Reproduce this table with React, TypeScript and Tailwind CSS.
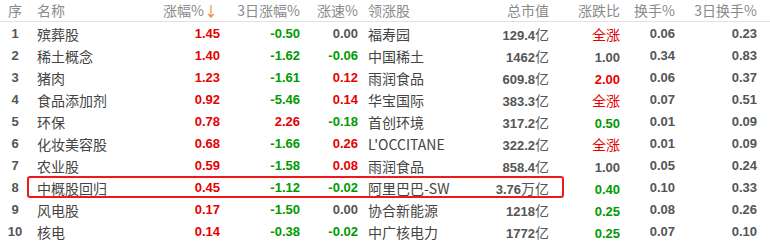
import React from 'react';

type Row = {
  name: string;
  chg: string;
  chg3: string;
  speed: string;
  leader: string;
  cap: string;
  unit: string;
  ratio: string;
  turn: string;
  turn3: string;
};

const rows: Row[] = [
  { name: '殡葬股', chg: '1.45', chg3: '-0.50', speed: '0.00', leader: '福寿园', cap: '129.4', unit: '亿', ratio: '全涨', turn: '0.06', turn3: '0.23' },
  { name: '稀土概念', chg: '1.40', chg3: '-1.62', speed: '-0.06', leader: '中国稀土', cap: '1462', unit: '亿', ratio: '1.00', turn: '0.34', turn3: '0.83' },
  { name: '猪肉', chg: '1.23', chg3: '-1.61', speed: '0.12', leader: '雨润食品', cap: '609.8', unit: '亿', ratio: '2.00', turn: '0.06', turn3: '0.37' },
  { name: '食品添加剂', chg: '0.92', chg3: '-5.46', speed: '0.14', leader: '华宝国际', cap: '383.3', unit: '亿', ratio: '全涨', turn: '0.07', turn3: '0.51' },
  { name: '环保', chg: '0.78', chg3: '2.26', speed: '-0.18', leader: '首创环境', cap: '317.2', unit: '亿', ratio: '0.50', turn: '0.01', turn3: '0.09' },
  { name: '化妆美容股', chg: '0.68', chg3: '-1.66', speed: '0.26', leader: "L'OCCITANE", cap: '322.2', unit: '亿', ratio: '全涨', turn: '0.01', turn3: '0.09' },
  { name: '农业股', chg: '0.59', chg3: '-1.58', speed: '0.08', leader: '雨润食品', cap: '858.4', unit: '亿', ratio: '1.00', turn: '0.05', turn3: '0.24' },
  { name: '中概股回归', chg: '0.45', chg3: '-1.12', speed: '-0.02', leader: '阿里巴巴-SW', cap: '3.76', unit: '万亿', ratio: '0.40', turn: '0.10', turn3: '0.33' },
  { name: '风电股', chg: '0.17', chg3: '-1.50', speed: '0.00', leader: '协合新能源', cap: '1218', unit: '亿', ratio: '0.25', turn: '0.08', turn3: '0.26' },
  { name: '核电', chg: '0.14', chg3: '-0.38', speed: '-0.02', leader: '中广核电力', cap: '1772', unit: '亿', ratio: '0.25', turn: '0.07', turn3: '0.10' },
];

const cjk = "font-['Microsoft_YaHei','Noto_Sans_CJK_SC',sans-serif]";
const num = "font-['Tahoma','Liberation_Sans',sans-serif] font-bold text-[13px]";

// colour by sign: up red, down green, flat gray
const signColor = (v: string) => {
  const n = parseFloat(v);
  if (n > 0) return 'text-[#e60000]';
  if (n < 0) return 'text-[#009a00]';
  return 'text-[#555555]';
};

const ratioColor = (v: string) => {
  const n = parseFloat(v);
  if (n > 1) return 'text-[#e60000]';
  if (n < 1) return 'text-[#009a00]';
  return 'text-[#555555]';
};

const grid = 'grid grid-cols-[30px_120px_72px_80px_58px_120px_71px_71px_55px_82px_11px] items-center';

export default function App() {
  return (
    <div className="w-[770px] h-[244px] bg-white overflow-hidden select-none">
      {/* 表头 */}
      <div className={`${grid} h-[22px] border-b border-[#e2e2e2] text-[14px] text-[#8a8a8a] ${cjk}`}>
        <div className="text-center">序</div>
        <div className="pl-[7px]">名称</div>
        <div className="text-right pr-[4px]">
          涨幅%<span className="text-[#f0822a]">↓</span>
        </div>
        <div className="text-right pr-[2px]">3日涨幅%</div>
        <div className="text-right pr-[2px]">涨速%</div>
        <div className="pl-[8px]">领涨股</div>
        <div className="text-right pr-[2px]">总市值</div>
        <div className="text-right pr-[2px]">涨跌比</div>
        <div className="text-right pr-[2px]">换手%</div>
        <div className="text-right pr-[2px]">3日换手%</div>
        <div />
      </div>

      {/* 数据行 */}
      {rows.map((r, i) => (
        <div key={r.name} className={`${grid} relative h-[22px]`}>
          <div className={`text-center text-[#555555] ${num}`}>{i + 1}</div>
          <div className={`pl-[7px] text-[14px] text-[#444444] ${cjk}`}>{r.name}</div>
          <div className={`text-right pr-[2px] ${num} ${signColor(r.chg)}`}>{r.chg}</div>
          <div className={`text-right pr-[2px] ${num} ${signColor(r.chg3)}`}>{r.chg3}</div>
          <div className={`text-right pr-[2px] ${num} ${signColor(r.speed)}`}>{r.speed}</div>
          <div className={`pl-[8px] text-[14px] text-[#444444] whitespace-nowrap ${cjk}`}>{r.leader}</div>
          <div className="text-right pr-[2px] whitespace-nowrap">
            <span className={`text-[#555555] ${num}`}>{r.cap}</span>
            <span className={`text-[14px] text-[#555555] ${cjk}`}>{r.unit}</span>
          </div>
          <div className="text-right pr-[2px]">
            {r.ratio === '全涨' ? (
              <span className={`text-[14px] text-[#e60000] ${cjk}`}>全涨</span>
            ) : (
              <span className={`${num} ${ratioColor(r.ratio)}`}>{r.ratio}</span>
            )}
          </div>
          <div className={`text-right pr-[2px] text-[#555555] ${num}`}>{r.turn}</div>
          <div className={`text-right pr-[2px] text-[#555555] ${num}`}>{r.turn3}</div>
          <div />
          {r.name === '中概股回归' && (
            <div className="absolute left-[27px] top-0 w-[537px] h-[22px] border-2 border-[#f01818] rounded-[3px] pointer-events-none" />
          )}
        </div>
      ))}
    </div>
  );
}
